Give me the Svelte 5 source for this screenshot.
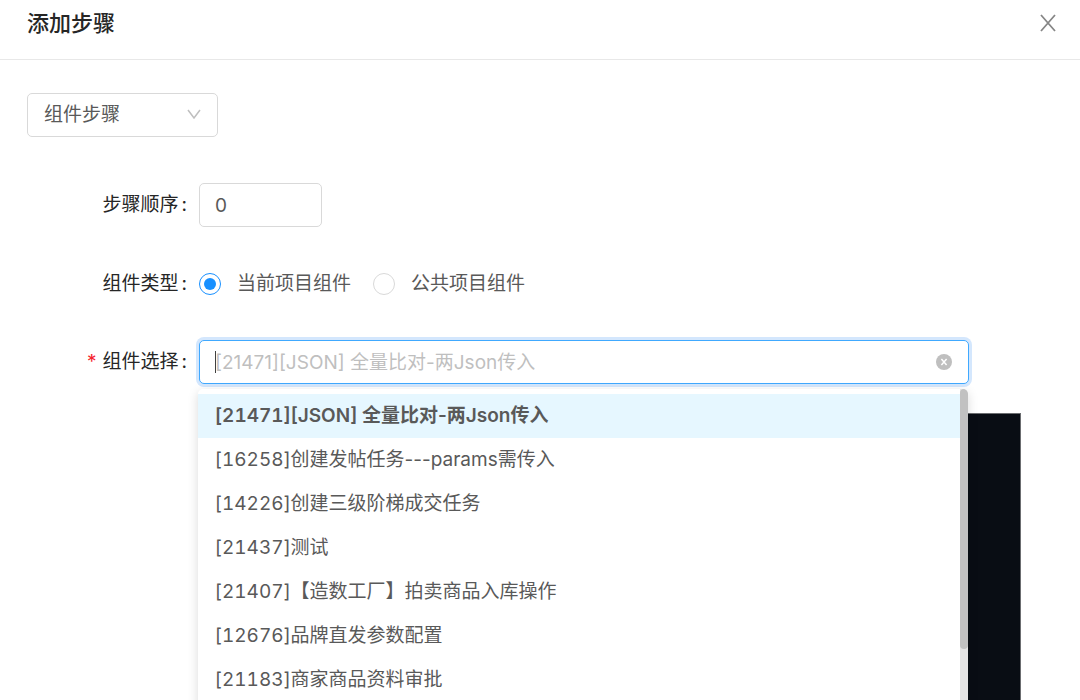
<script lang="ts">
  interface Component {
    id: number;
    name: string;
  }

  const components: Component[] = [
    { id: 21471, name: '[JSON] 全量比对-两Json传入' },
    { id: 16258, name: '创建发帖任务---params需传入' },
    { id: 14226, name: '创建三级阶梯成交任务' },
    { id: 21437, name: '测试' },
    { id: 21407, name: '【造数工厂】拍卖商品入库操作' },
    { id: 12676, name: '品牌直发参数配置' },
    { id: 21183, name: '商家商品资料审批' },
  ];

  let stepType = $state('component');
  let order = $state('0');
  let scope = $state('current');
  let keyword = $state('');
  let selectedId = $state<number | null>(21471);

  const selected = $derived(components.find((c) => c.id === selectedId));
</script>

<div class="drawer">
  <header class="header">
    <h1>添加步骤</h1>
    <button class="close" type="button" aria-label="关闭">
      <svg viewBox="0 0 18 18" width="18" height="18" aria-hidden="true">
        <path d="M2 1 L16 17 M16 1 L2 17" />
      </svg>
    </button>
  </header>

  <form class="body">
    <div class="step-type">
      <select aria-label="步骤类型" bind:value={stepType}>
        <option value="component">组件步骤</option>
      </select>
      <svg class="arrow" viewBox="0 0 14 10" width="14" height="10" aria-hidden="true">
        <path d="M1 1 L7 9 L13 1" />
      </svg>
    </div>

    <div class="row">
      <label class="name" for="order">步骤顺序<i>:</i></label>
      <input id="order" class="box order" inputmode="numeric" bind:value={order} />
    </div>

    <div class="row" role="radiogroup" aria-labelledby="scope-label">
      <span class="name" id="scope-label">组件类型<i>:</i></span>
      <div class="radios">
        <label><input type="radio" value="current" bind:group={scope} />当前项目组件</label>
        <label><input type="radio" value="public" bind:group={scope} />公共项目组件</label>
      </div>
    </div>

    <div class="row">
      <label class="name required" for="component">组件选择<i>:</i></label>
      <div class="picker">
        <input
          id="component"
          class="box search"
          role="combobox"
          aria-expanded="true"
          aria-controls="component-list"
          autocomplete="off"
          placeholder={selected ? `[${selected.id}]${selected.name}` : ''}
          bind:value={keyword}
        />
        {#if !keyword}<span class="caret"></span>{/if}
        <button class="clear" type="button" aria-label="清除" onclick={() => (selectedId = null)}>
          <svg viewBox="0 0 16 16" width="16" height="16" aria-hidden="true">
            <circle cx="8" cy="8" r="8" />
            <path d="M5.4 5 L10.6 11 M10.6 5 L5.4 11" />
          </svg>
        </button>

        <div class="dropdown">
          <ul id="component-list" role="listbox">
            {#each components as c (c.id)}
              <!-- svelte-ignore a11y_click_events_have_key_events -->
              <li
                role="option"
                tabindex="-1"
                aria-selected={c.id === selectedId}
                class:selected={c.id === selectedId}
                onclick={() => (selectedId = c.id)}
              >
                [<span class="id">{c.id}</span>]{c.name}
              </li>
            {/each}
          </ul>
          <div class="track"><div class="thumb"></div></div>
        </div>
      </div>
    </div>

    <div class="editor"></div>
  </form>
</div>

<style>
  :global(body) {
    margin: 0;
    background: #fff;
  }
  .drawer {
    display: flex;
    flex-direction: column;
    height: 100vh;
    overflow: hidden;
    color: #595959;
    font-family: Inter, 'Noto Sans CJK SC', sans-serif;
    font-size: 19px;
    line-height: 28px;
  }
  .drawer * {
    box-sizing: border-box;
  }
  input,
  select,
  button {
    margin: 0;
    color: inherit;
    font: inherit;
  }
  button {
    display: flex;
    padding: 0;
    border: 0;
    background: none;
    cursor: pointer;
  }

  .header {
    display: flex;
    align-items: center;
    justify-content: space-between;
    padding: 7px 23px 20px 27px;
    border-bottom: 1px solid #e8e8e8;
  }
  h1 {
    margin: 0;
    color: #262626;
    font-size: 22px;
    font-weight: 500;
    line-height: 32px;
  }
  .close path {
    fill: none;
    stroke: #868686;
    stroke-width: 1.8;
  }

  .body {
    display: flex;
    flex: 1;
    flex-direction: column;
    min-height: 0;
    padding: 33px 59px 0 27px;
  }
  .step-type {
    position: relative;
    width: 191px;
    margin-bottom: 46px;
  }
  select,
  .box {
    display: block;
    width: 100%;
    height: 44px;
    padding: 0 15px;
    border: 1px solid #d9d9d9;
    border-radius: 5px;
    outline: none;
    background: #fff;
  }
  select {
    padding: 0 16px;
    appearance: none;
  }
  .arrow {
    position: absolute;
    top: 16px;
    right: 17px;
    pointer-events: none;
  }
  .arrow path {
    fill: none;
    stroke: #bfbfbf;
    stroke-width: 1.5;
  }

  .row {
    display: grid;
    grid-template-columns: 160px 1fr;
    column-gap: 12px;
    align-items: center;
    min-height: 44px;
    margin-bottom: 34px;
  }
  .name {
    display: flex;
    justify-content: flex-end;
    color: #262626;
  }
  .name i {
    margin-left: 3px;
    font-style: normal;
  }
  .required::before {
    content: '*';
    margin-right: 6px;
    color: #f5222d;
  }
  .box.order {
    width: 123px;
  }

  .radios {
    display: flex;
    gap: 22px;
    line-height: 45px;
  }
  .radios label {
    display: flex;
    align-items: center;
    gap: 16px;
  }
  .radios input {
    appearance: none;
    display: grid;
    place-items: center;
    width: 22px;
    height: 22px;
    border: 1px solid #d9d9d9;
    border-radius: 50%;
  }
  .radios input:checked {
    border-color: #1890ff;
  }
  .radios input:checked::after {
    content: '';
    width: 12px;
    height: 12px;
    border-radius: 50%;
    background: #1890ff;
  }

  .picker {
    position: relative;
    margin-right: 52px;
  }
  .box.search {
    border-color: #40a9ff;
    box-shadow: 0 0 0 3px #d4e7fd;
  }
  .search::placeholder {
    color: #bfbfbf;
    opacity: 1;
  }
  .caret {
    position: absolute;
    top: 11px;
    left: 16px;
    width: 1px;
    height: 22px;
    background: #404040;
  }
  .clear {
    position: absolute;
    top: 14px;
    right: 17px;
  }
  .clear circle {
    fill: #bfbfbf;
  }
  .clear path {
    fill: none;
    stroke: #fff;
    stroke-width: 1.5;
  }

  .dropdown {
    position: absolute;
    z-index: 1;
    top: 49px;
    right: 1px;
    left: -1px;
    display: flex;
    height: 350px;
    overflow: hidden;
    border-radius: 5px;
    background: #fff;
    box-shadow: 0 3px 11px rgba(0, 0, 0, 0.15);
  }
  ul {
    flex: 1;
    margin: 0;
    padding: 5px 0;
    list-style: none;
  }
  li {
    padding: 8px 17px;
    white-space: nowrap;
    cursor: pointer;
  }
  li.selected {
    background: #e6f7ff;
    font-weight: 600;
  }
  .id {
    font-variant-numeric: tabular-nums;
  }
  .track {
    width: 8px;
    background: #e4e4e4;
  }
  .thumb {
    height: 260px;
    border-radius: 4px;
    background: #c1c1c1;
  }

  /* 下拉列表后面的深色代码区 */
  .editor {
    flex: 1;
    margin: -5px 0 0 172px;
    border: 1px solid #6b6d70;
    border-bottom: 0;
    background: #090d14;
  }
</style>
